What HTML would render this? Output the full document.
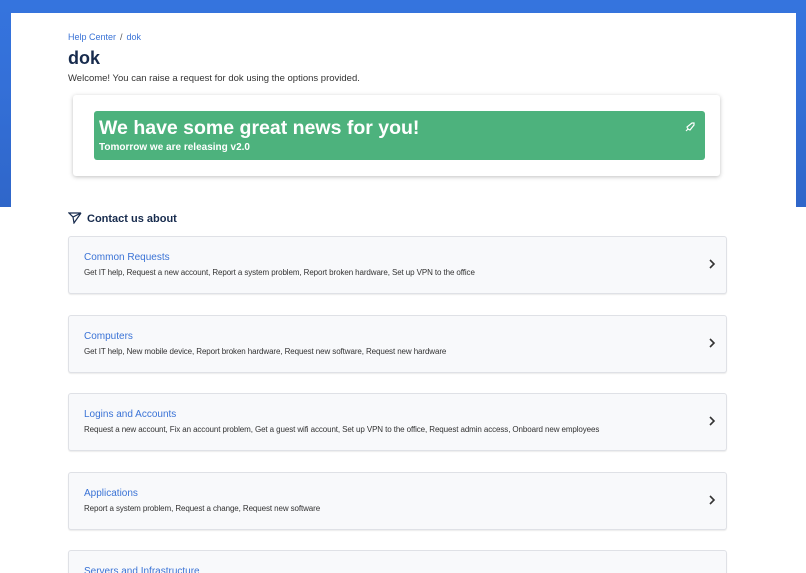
<!DOCTYPE html>
<html><head><style>
html,body{margin:0;width:806px;height:573px;overflow:hidden}
body{background:#fff;font-family:"Liberation Sans",sans-serif;position:relative}
.hdr{position:absolute;left:0;top:0;width:806px;height:207px;background:linear-gradient(180deg,#3574de 0,#3470d8 40%,#2f66c9 100%)}
.wrap{position:absolute;left:11px;top:13px;width:785px;height:560px;background:#fff;overflow:hidden}
.bc{position:absolute;left:57px;top:19px;font-size:9px;color:#3a73d6}
.bc span{color:#555;margin:0 4px}
h1{position:absolute;left:57px;top:35px;margin:0;font-size:18px;font-weight:bold;color:#172b4d}
.wel{position:absolute;left:57px;top:60px;font-size:9.5px;color:#333}
.box{position:absolute;left:62px;top:82px;width:647px;height:81px;background:#fff;border-radius:3px;box-shadow:0 1px 4px rgba(0,0,0,.25)}
.g{position:absolute;left:21px;top:16px;width:611px;height:49px;background:#4db27d;border-radius:3px;color:#fff}
.g .t{position:absolute;left:5px;top:6px;font-size:19.5px;font-weight:bold}
.g .s{position:absolute;left:5px;top:31px;font-size:10px;font-weight:bold}
.ct{position:absolute;left:57px;top:199px;font-size:11px;font-weight:bold;color:#172b4d}
.card{position:absolute;left:57px;width:657px;height:56px;background:#f8f9fb;border:1px solid #dfe1e6;border-radius:3px;box-shadow:0 1px 1px rgba(0,0,0,.08)}
.card .n{position:absolute;left:15px;top:15px;font-size:10px;color:#3a73d6}
.card .d{position:absolute;left:15px;top:31px;font-size:8px;color:#333;letter-spacing:-0.1px}
.card svg{position:absolute;right:10px;top:22px}
</style></head><body>
<div class="hdr"></div>
<div class="wrap">
<div class="bc">Help Center<span>/</span>dok</div>
<h1>dok</h1>
<div class="wel">Welcome! You can raise a request for dok using the options provided.</div>
<div class="box"><div class="g"><div class="t">We have some great news for you!</div><div class="s">Tomorrow we are releasing v2.0</div>
<svg style="position:absolute;right:9px;top:10px" width="12" height="12" viewBox="0 0 12 12"><path d="M2 10l2-2M4 8L3 6l5-4 2 0 0 2-4 5z" fill="none" stroke="#fff" stroke-width="1.2"/></svg></div></div>
<div class="ct"><svg width="14" height="12" viewBox="0 0 14 12" style="vertical-align:-2px;margin-right:5px"><path d="M1 1h12L5 5zM5 5l1 6 7-10" fill="none" stroke="#172b4d" stroke-width="1.2"/></svg>Contact us about</div>
<div class="card" style="top:223px"><div class="n">Common Requests</div><div class="d">Get IT help, Request a new account, Report a system problem, Report broken hardware, Set up VPN to the office</div><svg width="8" height="10" viewBox="0 0 8 10"><path d="M2 1l4 4-4 4" fill="none" stroke="#333" stroke-width="1.6"/></svg></div>
<div class="card" style="top:302px"><div class="n">Computers</div><div class="d">Get IT help, New mobile device, Report broken hardware, Request new software, Request new hardware</div><svg width="8" height="10" viewBox="0 0 8 10"><path d="M2 1l4 4-4 4" fill="none" stroke="#333" stroke-width="1.6"/></svg></div>
<div class="card" style="top:380px"><div class="n">Logins and Accounts</div><div class="d">Request a new account, Fix an account problem, Get a guest wifi account, Set up VPN to the office, Request admin access, Onboard new employees</div><svg width="8" height="10" viewBox="0 0 8 10"><path d="M2 1l4 4-4 4" fill="none" stroke="#333" stroke-width="1.6"/></svg></div>
<div class="card" style="top:459px"><div class="n">Applications</div><div class="d">Report a system problem, Request a change, Request new software</div><svg width="8" height="10" viewBox="0 0 8 10"><path d="M2 1l4 4-4 4" fill="none" stroke="#333" stroke-width="1.6"/></svg></div>
<div class="card" style="top:537px"><div class="n">Servers and Infrastructure</div></div>
</div>
</body></html>
